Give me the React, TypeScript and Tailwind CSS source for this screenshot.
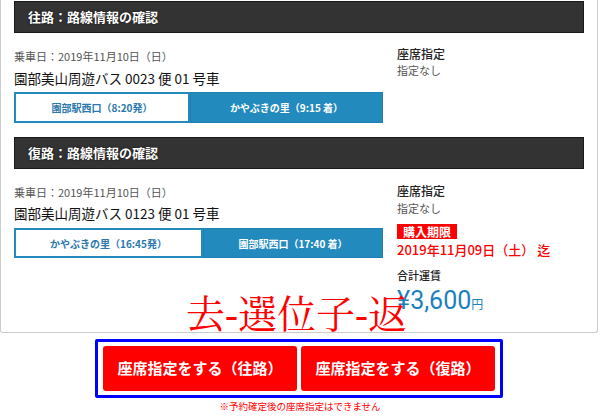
import type { ReactNode } from "react";

const jp = "font-['Noto_Sans_CJK_JP',sans-serif]";

function SectionHeader({ children }: { children: ReactNode }) {
  return (
    <div className="flex h-[32px] items-center border border-[#1a1a1a] bg-[#333333] pl-[13px] text-[13px] font-bold text-white [text-shadow:0_0_2px_rgba(0,0,0,0.8)]">
      {children}
    </div>
  );
}

function RouteBar({
  from,
  to,
  fromWidth,
  height,
}: {
  from: string;
  to: string;
  fromWidth: string;
  height: string;
}) {
  return (
    <div className={`flex w-[369px] ${height}`}>
      <div
        className={`flex ${fromWidth} items-center justify-center border-2 border-[#238abd] bg-white text-[10px] font-bold text-[#2a78ad]`}
      >
        {from}
      </div>
      <div className="flex flex-1 items-center justify-center border border-[#1f7fb2] bg-[#238abd] text-[10px] font-bold text-white">
        {to}
      </div>
    </div>
  );
}

export default function App() {
  return (
    <div className={`relative h-[418px] w-[600px] overflow-hidden bg-white ${jp}`}>
      <div className="w-[598px] rounded-b-[3px] border-x border-b border-[#cccccc] px-[13px] pt-[1px]">
        {/* outbound */}
        <SectionHeader>往路：路線情報の確認</SectionHeader>
        <div className="flex h-[104px]">
          <div className="flex w-[369px] flex-col">
            <p className="mt-[15px] h-[16px] text-[11px] leading-[16px] text-[#555555]">
              乗車日：2019年11月10日（日）
            </p>
            <p className="mt-[4px] h-[20px] text-[13.5px] leading-[20px] text-[#111111]">
              園部美山周遊バス 0023 便 01 号車
            </p>
            <div className="mt-[4px]">
              <RouteBar
                from="園部駅西口（8:20発）"
                to="かやぶきの里（9:15 着）"
                fromWidth="w-[176px]"
                height="h-[31px]"
              />
            </div>
          </div>
          <div className="ml-[14px] flex flex-col pt-[13px]">
            <p className="text-[12px] leading-[16px] font-medium text-[#222222]">座席指定</p>
            <p className="text-[11px] leading-[16px] text-[#555555]">指定なし</p>
          </div>
        </div>

        {/* return */}
        <SectionHeader>復路：路線情報の確認</SectionHeader>
        <div className="flex h-[163px]">
          <div className="flex w-[369px] flex-col">
            <p className="mt-[15px] h-[16px] text-[11px] leading-[16px] text-[#555555]">
              乗車日：2019年11月10日（日）
            </p>
            <p className="mt-[3px] h-[20px] text-[13.5px] leading-[20px] text-[#111111]">
              園部美山周遊バス 0123 便 01 号車
            </p>
            <div className="mt-[5px]">
              <RouteBar
                from="かやぶきの里（16:45発）"
                to="園部駅西口（17:40 着）"
                fromWidth="w-[189px]"
                height="h-[30px]"
              />
            </div>
          </div>
          <div className="ml-[14px] flex flex-col pt-[14px]">
            <p className="text-[12px] leading-[16px] font-medium text-[#222222]">座席指定</p>
            <p className="mt-[1px] text-[11px] leading-[16px] text-[#555555]">指定なし</p>
            <span className="mt-[8px] w-fit bg-[#ff0000] px-[6px] text-[12px] leading-[15px] font-bold text-white">
              購入期限
            </span>
            <p className="mt-[2px] text-[13px] leading-[18px] font-medium text-[#ff0000]">
              2019年11月09日（土） 迄
            </p>
            <p className="mt-[8px] text-[11px] leading-[16px] font-medium text-[#222222]">合計運賃</p>
            <p className="mt-[4px] leading-[28px] text-[#1c7fbf]">
              <span className="font-['Roboto',sans-serif] text-[25px]">¥3,600</span>
              <span className="text-[12px]">円</span>
            </p>
          </div>
        </div>
      </div>

      {/* annotation */}
      <div className="absolute left-[186px] top-[295px] font-['Liberation_Serif','Noto_Serif_CJK_JP',serif] text-[39px] leading-none text-[#ff0000]">
        去-選位子-返
      </div>

      {/* buttons */}
      <div className="mt-[6px] flex flex-col items-center">
        <div className="ml-[-2px] flex gap-[4px] rounded-[2px] border-[3px] border-[#0000ff] px-[5px] py-[4px]">
          <button className="h-[45px] w-[194px] rounded-[3px] bg-[#ff0000] text-[15px] font-bold text-white">
            座席指定をする（往路）
          </button>
          <button className="h-[45px] w-[194px] rounded-[3px] bg-[#ff0000] text-[15px] font-bold text-white">
            座席指定をする（復路）
          </button>
        </div>
        <p className="mt-[1px] text-[9.5px] leading-[14px] text-[#ff0000]">※予約確定後の座席指定はできません</p>
      </div>
    </div>
  );
}
